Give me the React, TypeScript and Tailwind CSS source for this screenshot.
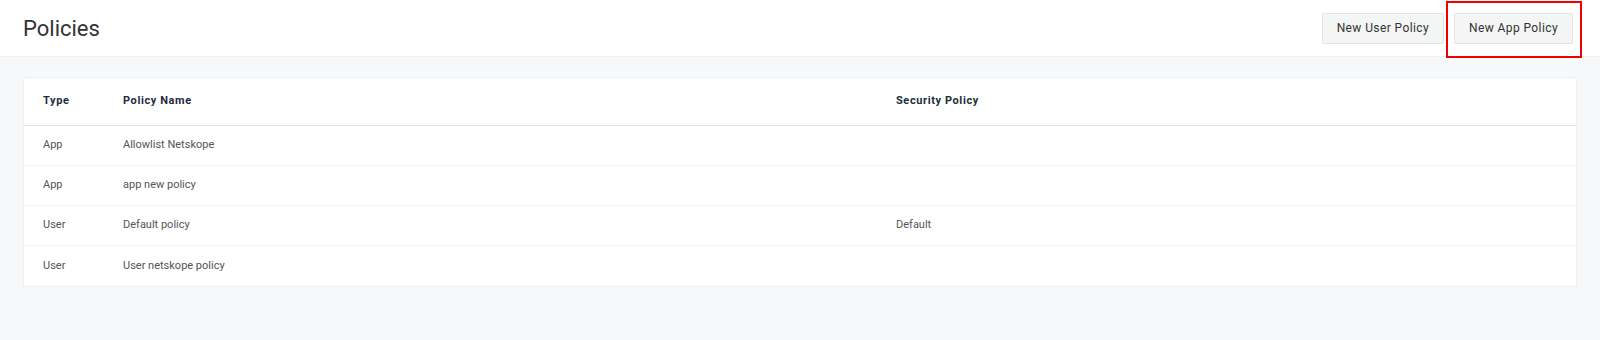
const rows = [
  { type: 'App', name: 'Allowlist Netskope', security: '' },
  { type: 'App', name: 'app new policy', security: '' },
  { type: 'User', name: 'Default policy', security: 'Default' },
  { type: 'User', name: 'User netskope policy', security: '' },
]

export default function App() {
  return (
    <div className="min-h-[340px] bg-[#f7f8f9] font-['Roboto',sans-serif]">
      <div className="relative flex h-[57px] items-center border-b border-[#eeeff0] bg-white pl-[23px] pr-[27px]">
        <h1 className="text-[22px] font-normal text-[#333]">Policies</h1>
        <div className="ml-auto flex items-center gap-[10px]">
          <button
            type="button"
            className="h-[31px] rounded-[2px] border border-[#e3e4e4] bg-[#f4f5f5] px-[14px] text-[12px] tracking-[0.4px] text-[#333]"
          >
            New User Policy
          </button>
          <div className="relative">
            <button
              type="button"
              className="h-[31px] rounded-[2px] border border-[#e3e4e4] bg-[#f4f5f5] px-[14px] text-[12px] tracking-[0.4px] text-[#333]"
            >
              New App Policy
            </button>
            <div className="pointer-events-none absolute -left-[8px] -right-[9px] -top-[12px] -bottom-[14px] border-2 border-[#f00000]" />
          </div>
        </div>
      </div>
      <div className="px-[23px] pt-[20px]">
        <div className="rounded-[2px] border border-[#f0f1f2] bg-white">
          <div className="grid h-[48px] grid-cols-[80px_773px_1fr] items-center border-b border-[#e3e3e3] pl-[19px] text-[11px] font-bold tracking-[0.6px] text-[#1d2d3b]">
            <span>Type</span>
            <span>Policy Name</span>
            <span>Security Policy</span>
          </div>
          {rows.map((r, i) => (
            <div
              key={r.name}
              className={
                'grid h-[40px] grid-cols-[80px_773px_1fr] items-center pl-[19px] text-[11px] text-[#555] ' +
                (i < rows.length - 1 ? 'border-b border-[#f3f3f3]' : '')
              }
            >
              <span>{r.type}</span>
              <span>{r.name}</span>
              <span>{r.security}</span>
            </div>
          ))}
        </div>
      </div>
    </div>
  )
}
